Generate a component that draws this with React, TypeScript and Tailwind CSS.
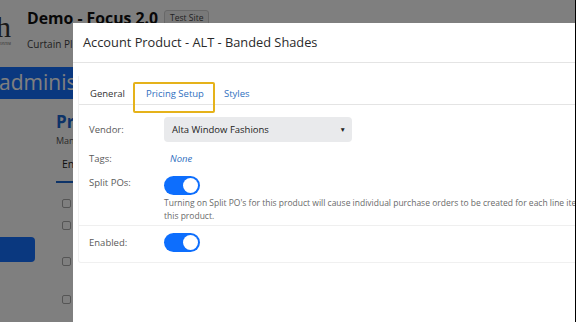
import React from "react";

function Toggle() {
  return (
    <div className="flex h-[19px] w-[36px] items-center justify-end rounded-full bg-[#0d6efd] pr-[2px]">
      <div className="h-[15px] w-[15px] rounded-full bg-white" />
    </div>
  );
}

function Row({
  label,
  children,
  className = "",
}: {
  label: string;
  children: React.ReactNode;
  className?: string;
}) {
  return (
    <div className={`flex ${className}`}>
      <div className="w-[75px] shrink-0 text-[9.5px] leading-[16px] text-[#5a5a5a]">{label}</div>
      <div className="flex-1 text-[9.5px] leading-[16px]">{children}</div>
    </div>
  );
}

export default function App() {
  return (
    <div
      className="relative h-[322px] w-[576px] overflow-hidden bg-white"
      style={{ fontFamily: '"Open Sans", "Liberation Sans", sans-serif' }}
    >
      {/* page behind the modal */}
      <div className="flex h-[64px] items-start">
        <div className="relative w-[27px] shrink-0">
          <div
            className="absolute left-[-4px] top-[12px] text-[30px] leading-none text-[#333]"
            style={{ fontFamily: '"Liberation Serif", serif' }}
          >
            h
          </div>
          <div className="absolute left-0 top-[42px] text-[3px] text-[#555]">SYSTEM</div>
        </div>
        <div className="pt-[7px]">
          <div className="flex items-center gap-[6px]">
            <span className="text-[15.8px] font-bold leading-[22px] text-[#111]">Demo - Focus 2.0</span>
            <span className="rounded-[3px] border border-[#d0d0d0] bg-[#f3f3f3] px-[5px] text-[8.5px] leading-[14px] text-[#444]">
              Test Site
            </span>
          </div>
          <div className="mt-[7px] text-[10px] leading-[16px] text-[#444]">Curtain Pl</div>
        </div>
      </div>
      <div className="mt-[3px] flex h-[32px] items-center whitespace-nowrap bg-[#1470ff] text-[21px] text-white">
        <span className="ml-[-1px]">administration</span>
      </div>
      <div className="pl-[56px] pt-[11px]">
        <div className="text-[17px] font-bold leading-[24px] text-[#1a66d0]">Products</div>
        <div className="text-[9px] leading-[14px] text-[#555]">Manage</div>
        <div className="mt-[8px] w-[40px] border-b-2 border-[#1a66d0] pb-[9px] pl-[6px] text-[10.5px] leading-[16px] text-[#222]">
          Enabled
        </div>
        <div className="ml-[6px] flex flex-col">
          <div className="mt-[16px] h-[9px] w-[9px] rounded-[2px] border border-[#aaa]" />
          <div className="mt-[13px] h-[9px] w-[9px] rounded-[2px] border border-[#aaa]" />
          <div className="mt-[27px] h-[9px] w-[9px] rounded-[2px] border border-[#aaa]" />
          <div className="mt-[29px] h-[9px] w-[9px] rounded-[2px] border border-[#aaa]" />
        </div>
      </div>
      <div className="absolute left-0 top-[237px] h-[25px] w-[35px] rounded-r-[4px] bg-[#1470ff]" />

      {/* backdrop */}
      <div className="absolute inset-0 bg-black/50" />

      {/* modal */}
      <div className="absolute left-[73px] top-[23px] h-[320px] w-[560px] bg-white">
        <div className="flex h-[40px] items-center border-b border-[#e4e4e4] pl-[10px] text-[12.8px] text-[#2a2a2a]">
          Account Product - ALT - Banded Shades
        </div>
        <div className="px-[5px] pt-[13px]">
          <div className="rounded-b-[3px] border border-t-0 border-[#f0f0f0] pb-[10px]">
            <div className="flex h-[29px] items-end border-b border-[#e4e4e4] pl-[11px] text-[9.5px] leading-[14px]">
              <div className="pb-[3px] text-[#333]">General</div>
              <div className="relative ml-[21px] pb-[3px] text-[#2f6fc0]">
                <div className="absolute bottom-[-9px] left-[-13px] right-[-11px] top-[-5px] rounded-[2px] border-2 border-[#e5b21a]" />
                Pricing Setup
              </div>
              <div className="ml-[20px] pb-[3px] text-[#2f6fc0]">Styles</div>
            </div>
            <div className="pl-[10px] pt-[12px]">
              <Row label="Vendor:" className="items-center">
                <div className="flex h-[25px] w-[188px] items-center justify-between rounded-[4px] bg-[#e9eaec] pl-[8px] pr-[6px] text-[#222]">
                  <span>Alta Window Fashions</span>
                  <span className="text-[6.5px] text-[#222]">▼</span>
                </div>
              </Row>
              <Row label="Tags:" className="mt-[9px]">
                <div className="pl-[6px] italic text-[#2f6fc0]">None</div>
              </Row>
              <Row label="Split POs:" className="mt-[8px]">
                <div className="pt-[1px]">
                  <Toggle />
                  <div className="mt-[1px] text-[8.5px] leading-[13px] text-[#6a6a6a]">
                    <div className="whitespace-nowrap">
                      Turning on Split PO's for this product will cause individual purchase orders to be created for each line item on
                    </div>
                    <div>this product.</div>
                  </div>
                </div>
              </Row>
            </div>
            <div className="mt-[3px] border-t border-[#efefef]" />
            <div className="pl-[10px] pt-[7px]">
              <Row label="Enabled:" className="items-center">
                <Toggle />
              </Row>
            </div>
          </div>
        </div>
      </div>
      <div className="absolute right-0 top-0 h-full w-px bg-black" />
    </div>
  );
}
